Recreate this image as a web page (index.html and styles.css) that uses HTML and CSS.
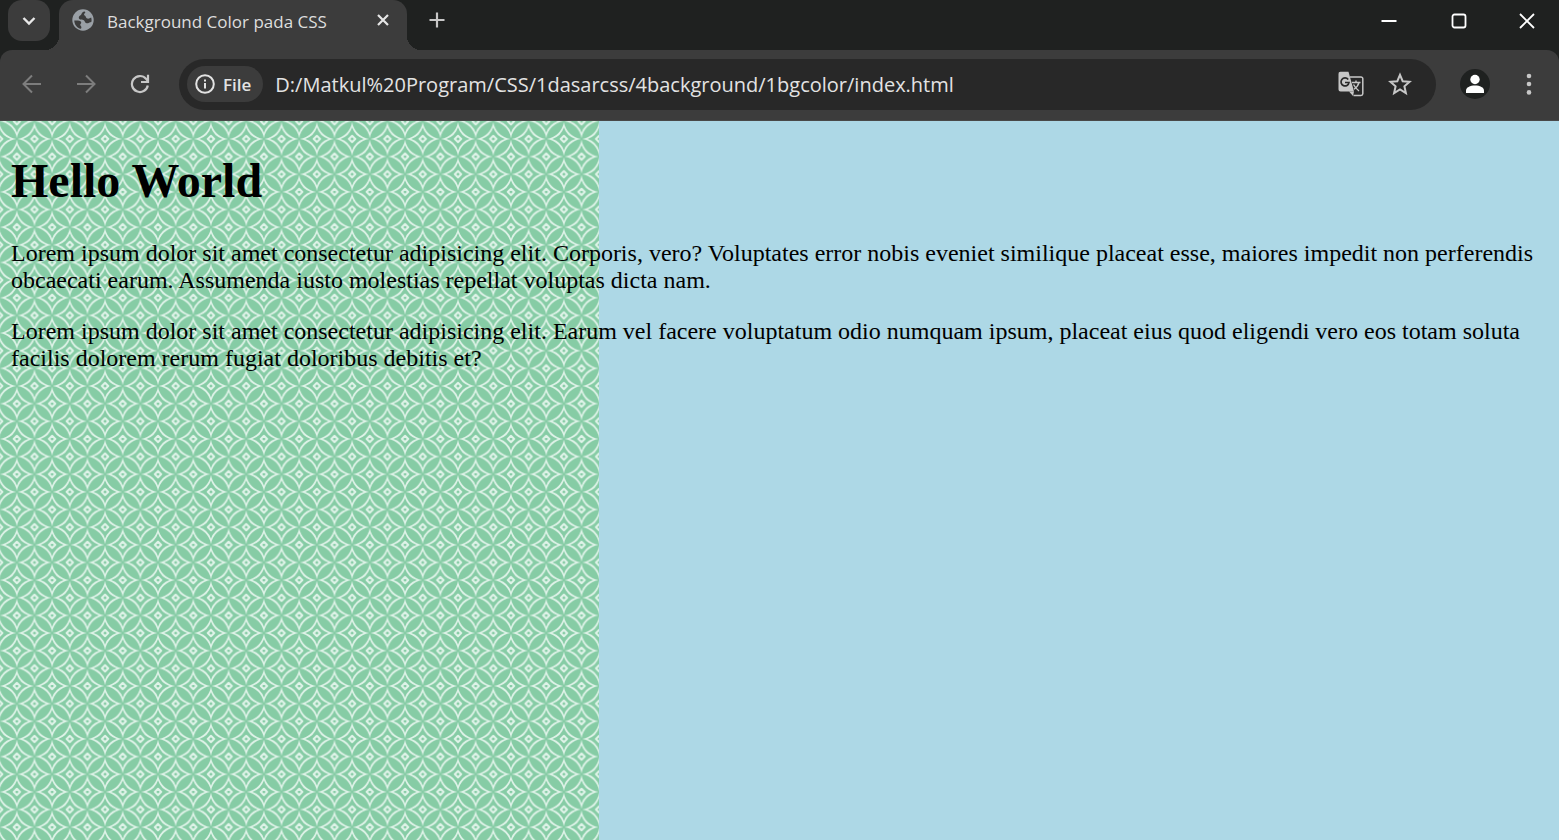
FILE: index.html
```html
<!DOCTYPE html>
<html lang="id">
<head>
<meta charset="utf-8">
<title>Background Color pada CSS</title>
<link rel="stylesheet" href="styles.css">
</head>
<body>
<div class="browser">
  <header class="tab-strip">
    <button class="tab-search" aria-label="Search tabs"><svg width="14" height="10" viewBox="0 0 14 10"><path d="M1.500 2 7 7.500 12.500 2" fill="none" stroke="#e8e8e8" stroke-width="2.400"/></svg></button>
    <div class="tab">
      <svg class="favicon" width="22" height="22" viewBox="0 0 22 22"><circle cx="11" cy="11" r="10.700" fill="#9aa0a6"/><path d="M12.300 2.500C9.500 3 9.800 5.700 8.500 6.200 6.800 6.800 6.300 8.800 7.300 10c1 1 3.200.3 4.500 1.200 1.300 1 1 2.500 2.700 3 1.500.4 2.800-.8 4.800-1.200.5-1.500.3-3-.1-4.500-1.500 1-3 1.700-4.500.8-1.200-.8-.7-2-2-2.700-1.200-.6-.5-2.100.3-2.600.7-.5.3-1.300-.7-1.500Z" fill="#3c3c3c"/><path d="M2.300 11.500c2 0 4.200-.1 5.700.6 2 .9 1.200 2.400.4 3.200-.8.9.8 1.500 1 2.700.1.700-.2 1.300-.5 1.800C5 19 2.300 15.500 2.300 11.500Z" fill="#3c3c3c"/></svg>
      <span class="tab-title">Background Color pada CSS</span>
      <button class="icon-button tab-close" aria-label="Close tab"><svg width="12" height="12" viewBox="0 0 12 12"><path d="m1 1 10 10M11 1 1 11" stroke="#e6e6e6" stroke-width="2.200"/></svg></button>
    </div>
    <button class="icon-button new-tab" aria-label="New tab"><svg width="16" height="16" viewBox="0 0 16 16"><path d="M8 .5v15M.5 8h15" stroke="#c7c7c7" stroke-width="2.200"/></svg></button>
    <div class="window-controls">
      <button class="icon-button" aria-label="Minimize"><svg width="16" height="16" viewBox="0 0 16 16"><path d="M.5 8h15" stroke="#fff" stroke-width="2"/></svg></button>
      <button class="icon-button" aria-label="Maximize"><svg width="16" height="16" viewBox="0 0 16 16"><rect x="1.500" y="1.500" width="13" height="13" rx="2" fill="none" stroke="#fff" stroke-width="1.800"/></svg></button>
      <button class="icon-button" aria-label="Close"><svg width="16" height="16" viewBox="0 0 16 16"><path d="m1 1 14 14M15 1 1 15" stroke="#fff" stroke-width="1.800"/></svg></button>
    </div>
  </header>
  <nav class="toolbar">
    <div class="navigation">
      <button class="icon-button" aria-label="Back"><svg width="20" height="20" viewBox="0 0 20 20"><path d="M19 10H2M10 1.500 1.500 10l8.500 8.500" fill="none" stroke="#7d7d7d" stroke-width="2"/></svg></button>
      <button class="icon-button" aria-label="Forward"><svg width="20" height="20" viewBox="0 0 20 20"><path d="M1 10h17M10 1.500l8.500 8.500-8.500 8.500" fill="none" stroke="#7d7d7d" stroke-width="2"/></svg></button>
      <button class="icon-button" aria-label="Reload"><svg width="20" height="20" viewBox="0 0 20 20"><path d="M17.800 11.500A8 8 0 1 1 16 4.800L17.500 6.500" fill="none" stroke="#c7c7c7" stroke-width="2.200"/><path d="M18 .8V8h-7" fill="none" stroke="#c7c7c7" stroke-width="2.200"/></svg></button>
    </div>
    <div class="omnibox">
      <button class="file-chip"><svg width="20" height="20" viewBox="0 0 20 20"><circle cx="10" cy="10" r="8.800" fill="none" stroke="#e3e3e3" stroke-width="2"/><path d="M10 9v5.500M10 5.500v2" stroke="#e3e3e3" stroke-width="2"/></svg>File</button>
      <input class="address" type="text" aria-label="Address" value="D:/Matkul%20Program/CSS/1dasarcss/4background/1bgcolor/index.html">
      <button class="icon-button" aria-label="Translate"><svg width="26" height="26" viewBox="0 0 26 26"><path d="M12 6h11a1.800 1.800 0 0 1 1.800 1.800v15A1.800 1.800 0 0 1 23 24.500h-7.500" fill="none" stroke="#c7c7c7" stroke-width="1.500"/><path d="M2.500.8h8L16 20.500H2.500a2 2 0 0 1-2-2v-15.500a2 2 0 0 1 2-2.200Z" fill="#c7c7c7"/><path d="m11 20.500 4 4.500 1-4.500Z" fill="#c7c7c7"/><path d="M10.200 8.500A4 4 0 1 0 11 11.500H7" fill="none" stroke="#282828" stroke-width="1.700"/><path d="M14 11.500h8.500M18 9.500v2M21 11.500c-.7 3-2.500 5-5 6.800M15.500 13.500c1.500 2.800 3 4.500 5.500 6.500" fill="none" stroke="#c7c7c7" stroke-width="1.400"/></svg></button>
      <button class="icon-button" aria-label="Bookmark"><svg width="24" height="24" viewBox="0 0 24 24"><path d="m12 2.800 2.700 6.400 6.900.6-5.200 4.500 1.500 6.800-5.900-3.600-5.900 3.600 1.500-6.800-5.200-4.500 6.900-.6Z" fill="none" stroke="#c7c7c7" stroke-width="2"/></svg></button>
    </div>
    <button class="icon-button profile" aria-label="Profile"><svg width="30" height="30" viewBox="0 0 30 30"><circle cx="15" cy="15" r="15" fill="#1f2120"/><circle cx="15" cy="10.500" r="4.700" fill="#fff"/><path d="M6 24v-2.500c0-3 4-5 9-5s9 2 9 5V24Z" fill="#fff"/></svg></button>
    <button class="icon-button menu" aria-label="Menu"><svg width="6" height="22" viewBox="0 0 6 22"><g fill="#c7c7c7"><circle cx="3" cy="3" r="2.300"/><circle cx="3" cy="11" r="2.300"/><circle cx="3" cy="19.400" r="2.300"/></g></svg></button>
  </nav>
  <main class="page">
    <svg class="pattern" aria-hidden="true">
      <defs>
        <g id="motif">
          <path d="M0-17A20.500 20.500 0 0 0 17 0A20.500 20.500 0 0 0 0 17A20.500 20.500 0 0 0-17 0A20.500 20.500 0 0 0 0-17Z" fill="#e0f3e9"/>
          <path d="M0-11.500A18 18 0 0 0 11.500 0A18 18 0 0 0 0 11.500A18 18 0 0 0-11.500 0A18 18 0 0 0 0-11.500Z" fill="#86cca5"/>
          <path d="M0-3.200 3.200 0 0 3.200-3.200 0Z" fill="none" stroke="#e0f3e9" stroke-width="2" stroke-linejoin="round"/>
        </g>
        <pattern id="kawung" width="35.294" height="35.294" patternUnits="userSpaceOnUse" patternTransform="translate(-.8 .3)">
          <rect width="36" height="36" fill="#86cca5"/>
          <use href="#motif" x="17.647" y="0"/><use href="#motif" x="17.647" y="35.294"/>
          <use href="#motif" x="0" y="17.647"/><use href="#motif" x="35.294" y="17.647"/>
        </pattern>
      </defs>
      <rect width="100%" height="100%" fill="url(#kawung)"/>
    </svg>
    <article class="content">
      <h1>Hello World</h1>
      <p>Lorem ipsum dolor sit amet consectetur adipisicing elit. Corporis, vero? Voluptates error nobis eveniet similique placeat esse, maiores impedit non perferendis obcaecati earum. Assumenda iusto molestias repellat voluptas dicta nam.</p>
      <p>Lorem ipsum dolor sit amet consectetur adipisicing elit. Earum vel facere voluptatum odio numquam ipsum, placeat eius quod eligendi vero eos totam soluta facilis dolorem rerum fugiat doloribus debitis et?</p>
    </article>
  </main>
</div>
</body>
</html>
```
FILE: styles.css
```css
* { box-sizing: border-box; }
body { margin: 0; background: #add8e6; }
button { border: 0; padding: 0; background: none; color: inherit; font: inherit; }
svg { display: block; flex: none; }
.browser { display: flex; flex-direction: column; min-height: 100vh; background: #1f2120; font-family: "Open Sans", "Noto Sans", sans-serif; }
.tab-strip { display: flex; height: 50px; padding-left: 8px; }
.icon-button { display: flex; align-items: center; justify-content: center; }
.tab-search { display: flex; align-items: center; justify-content: center; width: 42px; height: 41px; border-radius: 14px; background: #3c3c3c; }
.tab { position: relative; display: flex; align-items: center; width: 348px; margin-left: 9px; padding: 0 18px 10px 13px; border-radius: 14px 14px 0 0; background: #3c3c3c; }
.tab::before, .tab::after { content: ""; position: absolute; bottom: 0; width: 14px; height: 14px; }
.tab::before { right: 100%; background: radial-gradient(circle at 0 0, transparent 14px, #3c3c3c 14px); }
.tab::after { left: 100%; background: radial-gradient(circle at 100% 0, transparent 14px, #3c3c3c 14px); }
.tab-title { flex: 1; margin: 3px 0 0 13px; color: #dedede; font-size: 17px; line-height: 24px; white-space: nowrap; }
.new-tab { width: 32px; height: 40px; margin-left: 14px; }
.window-controls { display: flex; gap: 2px; height: 42px; margin-left: auto; }
.window-controls .icon-button { width: 68px; }
.window-controls .icon-button:last-child { width: 64px; }
.toolbar { display: flex; align-items: center; height: 71px; padding: 0 15px 2px 22px; border-bottom: 1px solid #494949; border-radius: 12px 12px 0 0; background: #3c3c3c; }
.navigation { display: flex; gap: 34px; width: 157px; }
.omnibox { display: flex; flex: 1; align-items: center; gap: 24px; height: 51px; padding: 0 24px 0 8px; border-radius: 26px; background: #282828; color: #e3e3e3; }
.file-chip { display: flex; align-items: center; gap: 8px; height: 36px; padding: 0 12px 0 8px; border-radius: 18px; background: #3c3c3c; font-size: 17px; font-weight: 600; }
.address { flex: 1; min-width: 0; height: 36px; margin-left: -12px; padding: 0; border: 0; outline: 0; background: none; color: inherit; font: 20px "Open Sans", "Noto Sans", sans-serif; }
.profile { margin-left: 24px; }
.menu { width: 30px; margin-left: 24px; }
.page { position: relative; flex: 1; background: #add8e6; color: #000; font: 24px "Liberation Serif", "Times New Roman", serif; overflow: hidden; }
.pattern { position: absolute; top: 0; left: 0; width: 599px; height: 100%; }
.content { position: relative; margin: 0 11px; }
.content h1 { margin: 32px 0; font-size: 48px; line-height: 55px; }
.content p { margin: 24px 0; line-height: 27px; }
```
